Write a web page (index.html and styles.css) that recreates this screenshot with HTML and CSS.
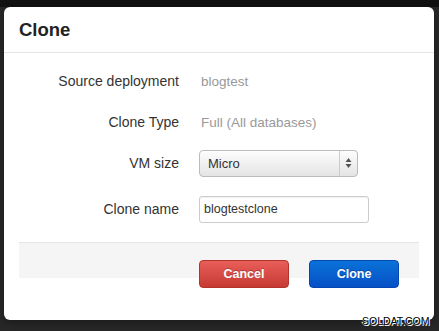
FILE: index.html
```html
<!DOCTYPE html>
<html>
  <head>
    <title>Clone</title>
    <meta charset="UTF-8" />
    <link rel="stylesheet" href="styles.css">
  </head>

  <body>
    <div class="modal">
      <div class="modal_header">
        <h3 class="modal_title">Clone</h3>
      </div>

      <div class="modal_body">
        <div class="form_row">
          <span class="form_label">Source deployment</span>
          <span class="form_value">blogtest</span>
        </div>
        <div class="form_row">
          <span class="form_label">Clone Type</span>
          <span class="form_value">Full (All databases)</span>
        </div>
        <div class="form_row">
          <span class="form_label">VM size</span>
          <div class="select_box">
            <span class="select_text">Micro</span>
            <span class="select_arrow">
              <svg width="7" height="12" viewBox="0 0 7 12">
                <path d="M3.5 1 L6.5 5 L0.5 5 Z" fill="#555" />
                <path d="M3.5 11 L6.5 7 L0.5 7 Z" fill="#555" />
              </svg>
            </span>
          </div>
        </div>
        <div class="form_row form_row_last">
          <span class="form_label">Clone name</span>
          <input class="text_input" type="text" value="blogtestclone" />
        </div>
      </div>

      <div class="modal_footer">
        <button class="btn btn_cancel">Cancel</button>
        <button class="btn btn_clone">Clone</button>
      </div>
    </div>

    <div class="watermark">SOLDAT.COM</div>
  </body>
</html>
```

FILE: styles.css
```css
body {
  margin: 0;
  height: 331px;
  overflow: hidden;
  background: linear-gradient(#111 0, #111 7px, #272727 7px);
  font-family: "Liberation Sans", Arial, sans-serif;
  color: #333;
}

.modal {
  margin: 7px 0 0 4px;
  width: 430px;
  height: 313px;
  background: #fff;
  border-radius: 6px;
  box-shadow: 0 3px 7px rgba(0, 0, 0, 0.3);
}

.modal_header {
  padding: 13px 15px 12px;
  border-bottom: 1px solid #e5e5e5;
}

.modal_title {
  margin: 0;
  font-size: 18.5px;
  line-height: 20px;
  font-weight: bold;
  color: #222;
}

.modal_body {
  padding: 13px 15px 0;
  display: flex;
  flex-direction: column;
  gap: 11px;
}

.form_row {
  display: grid;
  grid-template-columns: 160px 1fr;
  column-gap: 20px;
  align-items: center;
  height: 30px;
}

.form_row_last {
  margin-top: 5px;
}

.form_label {
  text-align: right;
  font-size: 14px;
  color: #333;
}

.form_value {
  font-size: 13.5px;
  color: #999;
  padding-left: 2px;
}

.select_box {
  width: 157px;
  height: 25px;
  display: flex;
  align-items: center;
  border: 1px solid #bbb;
  border-radius: 4px;
  background: linear-gradient(#fdfdfd, #e4e4e4);
  box-shadow: inset 0 1px 0 #fff;
}

.select_text {
  flex: 1;
  padding-left: 8px;
  font-size: 13px;
  color: #333;
}

.select_arrow {
  width: 17px;
  height: 100%;
  border-left: 1px solid #ccc;
  display: flex;
  align-items: center;
  justify-content: center;
}

.text_input {
  box-sizing: border-box;
  width: 170px;
  height: 27px;
  margin: 0;
  padding: 0 4px;
  border: 1px solid #ccc;
  border-radius: 3px;
  box-shadow: inset 0 1px 1px rgba(0, 0, 0, 0.06);
  font-family: "Liberation Sans", Arial, sans-serif;
  font-size: 12.5px;
  color: #333;
  outline: none;
}

/* gray strip is shorter than the buttons, they hang below it */
.modal_footer {
  margin: 18px 15px 0;
  height: 18px;
  padding: 17px 20px 0;
  border-top: 1px solid #e5e5e5;
  background: #f5f5f5;
  display: flex;
  justify-content: flex-end;
  align-items: flex-start;
  gap: 20px;
}

.btn {
  width: 90px;
  height: 28px;
  flex-shrink: 0;
  border-radius: 4px;
  font-family: "Liberation Sans", Arial, sans-serif;
  font-size: 12.5px;
  font-weight: bold;
  color: #fff;
  text-shadow: 0 -1px 0 rgba(0, 0, 0, 0.25);
  cursor: pointer;
}

.btn_cancel {
  background: linear-gradient(#e85e59, #c73a34);
  border: 1px solid #b5332d;
}

.btn_clone {
  background: linear-gradient(#0a72d8, #0650c6);
  border: 1px solid #0447b0;
}

.watermark {
  position: absolute;
  left: 362px;
  top: 315px;
  font-size: 10.5px;
  color: #000;
  text-shadow: 0 0 1px #fff, 1px 1px 0 #fff, -1px -1px 0 #fff;
}
```
